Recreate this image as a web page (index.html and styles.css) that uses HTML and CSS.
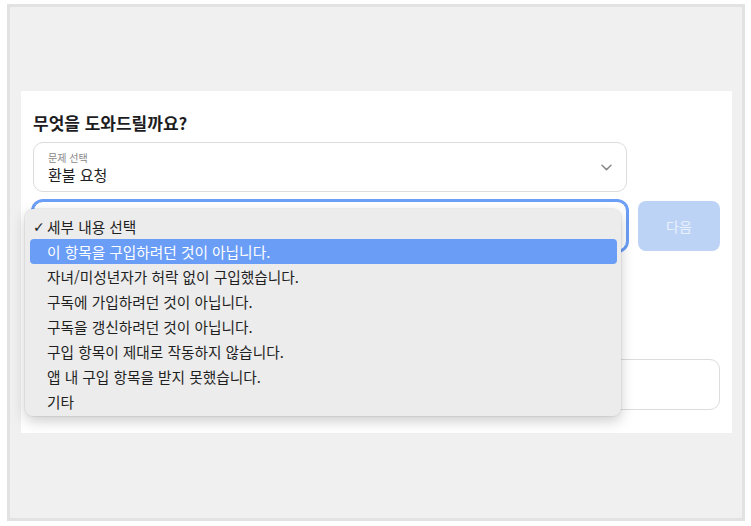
FILE: index.html
```html
<!DOCTYPE html>
<html lang="ko">
<head>
    <meta charset="UTF-8">
    <meta name="viewport" content="width=device-width, initial-scale=1.0">
    <title>문의하기</title>
    <link rel="stylesheet" href="styles.css">
</head>
<body>
    <div class="frame">
      <div class="panel">
        <h2 class="title">무엇을 도와드릴까요?</h2>

        <div class="row">
          <div class="select">
            <span class="select-label">문제 선택</span>
            <span class="select-value">환불 요청</span>
            <svg class="chevron" width="11" height="7" viewBox="0 0 11 7">
              <path d="M1 1.2 L5.5 5.6 L10 1.2" fill="none" stroke="#8a8a8a" stroke-width="1.5" stroke-linecap="round" stroke-linejoin="round"/>
            </svg>
          </div>
        </div>

        <div class="row">
          <div class="select focused"></div>
          <button class="next" disabled>다음</button>

          <ul class="menu">
            <li class="item"><span class="check">✓</span>세부 내용 선택</li>
            <li class="item active"><span class="check"></span>이 항목을 구입하려던 것이 아닙니다.</li>
            <li class="item"><span class="check"></span>자녀/미성년자가 허락 없이 구입했습니다.</li>
            <li class="item"><span class="check"></span>구독에 가입하려던 것이 아닙니다.</li>
            <li class="item"><span class="check"></span>구독을 갱신하려던 것이 아닙니다.</li>
            <li class="item"><span class="check"></span>구입 항목이 제대로 작동하지 않습니다.</li>
            <li class="item"><span class="check"></span>앱 내 구입 항목을 받지 못했습니다.</li>
            <li class="item"><span class="check"></span>기타</li>
          </ul>
        </div>

        <div class="textarea"></div>
      </div>
    </div>
</body>
</html>
```

FILE: styles.css
```css
body {
  margin: 0;
  font-family: "Noto Sans CJK KR", "Noto Sans", sans-serif;
  color: #1d1d1f;
}

.frame {
  margin: 4px 0 0 7px;
  width: 721px;
  height: 427px;
  border: 3px solid #e2e2e2;
  background-color: #f0f0f0;
  padding-top: 84px;
  padding-left: 11px;
}

.panel {
  width: 711px;
  box-sizing: border-box;
  background-color: #fff;
  padding: 20px 12px 23px;
}

.title {
  margin: 0 0 7px;
  font-size: 17px;
  line-height: 24px;
  font-weight: 700;
  color: #1d1d1f;
}

.row {
  position: relative;
  display: grid;
  grid-template-columns: 594px 82px;
  gap: 11px;
  margin-bottom: 9px;
}

.select {
  position: relative;
  height: 50px;
  box-sizing: border-box;
  border: 1px solid #dcdcdc;
  border-radius: 10px;
  background-color: #fff;
  padding: 8px 14px 0;
  display: flex;
  flex-direction: column;
}

.select-label {
  font-size: 10px;
  line-height: 14px;
  color: #888;
}

.select-value {
  font-size: 15px;
  line-height: 20px;
  color: #1d1d1f;
}

.chevron {
  position: absolute;
  right: 14px;
  top: 21px;
}

.select.focused {
  border-color: #6b9ef6;
  box-shadow: 0 0 0 2px #6b9ef6;
}

.next {
  height: 50px;
  border: none;
  border-radius: 8px;
  background-color: #bdd3f5;
  color: #eaf1fd;
  font-family: inherit;
  font-size: 14px;
}

.menu {
  position: absolute;
  left: -8px;
  top: 8px;
  width: 596px;
  box-sizing: border-box;
  margin: 0;
  padding: 5px 4px 2px 5px;
  list-style: none;
  background-color: #ececec;
  border-radius: 8px;
  box-shadow: 0 0 0 1px rgba(0, 0, 0, 0.05), 0 5px 14px rgba(0, 0, 0, 0.2);
}

.item {
  display: flex;
  align-items: center;
  height: 25px;
  padding-left: 3px;
  border-radius: 4px;
  font-size: 14.7px;
  color: #1f1f1f;
}

.check {
  width: 14px;
  font-family: "DejaVu Sans", sans-serif;
  font-size: 14px;
}

.item.active {
  background-color: #6a9df6;
  color: #fff;
}

.textarea {
  margin-top: 108px;
  height: 51px;
  box-sizing: border-box;
  border: 1px solid #dcdcdc;
  border-radius: 10px;
}
```
